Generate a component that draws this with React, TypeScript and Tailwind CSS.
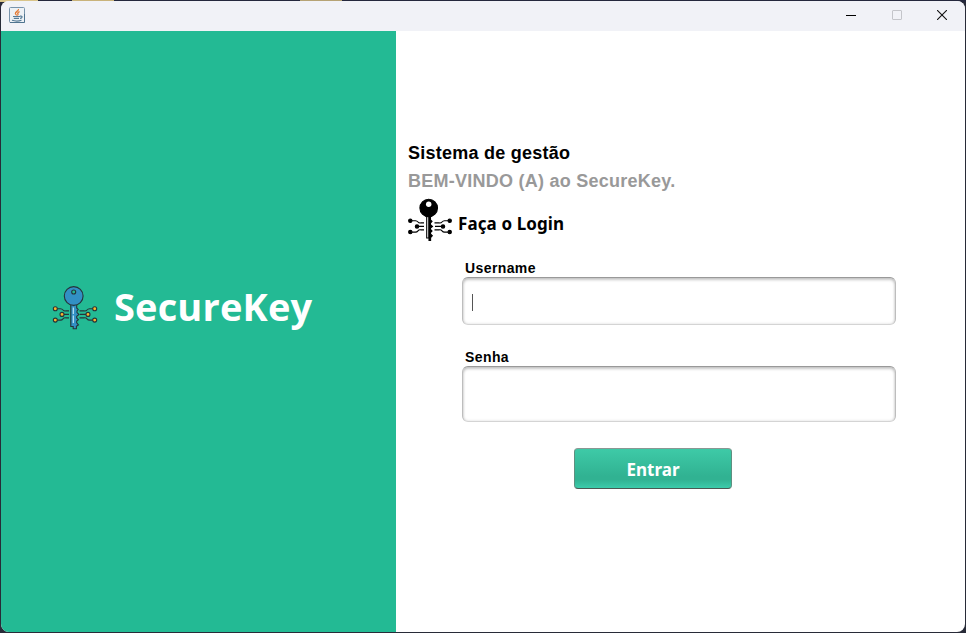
import type { ReactNode } from "react";

function CircuitKey({ dark = false }: { dark?: boolean }) {
  const line = dark ? "#000" : "#26343a";
  const fill = dark ? "#000" : "#3290c4";
  const node = dark ? "#000" : "#fdb52b";
  return (
    <svg width="46" height="46" viewBox="0 0 46 46" fill="none" className="shrink-0">
      <g stroke={line} strokeWidth="1.1">
        <path d="M5 23.7H8.5Q10 23.7 11 25T14 25.9H17M12 29.4H17M5 35.1H8.5Q10 35.1 11 33.8T14 32.9H17" />
        <path d="M41 23.7H37.5Q36 23.7 35 25T32 25.9H27.5M34 29.4H28M41 35.1H37.5Q36 35.1 35 33.8T32 32.9H27.5" />
        {[
          [3.3, 23.7],
          [10, 29.4],
          [3.3, 35.1],
          [42.7, 23.7],
          [36, 29.4],
          [42.7, 35.1],
        ].map(([x, y]) => (
          <circle key={`${x}-${y}`} cx={x} cy={y} r={dark ? 1.7 : 2} fill={node} />
        ))}
        {dark ? (
          <>
            <path fill="#fff" d="M19.7 19V41H22V19Z" />
            <path fill="#000" d="M22 18.5V43.5H23.6V40.5L25.3 38.7L23.5 37V35.5L25 34L23.5 32.5V31L25.5 29.4L23.5 27.6V26L25 24.4L23.5 23V18.5Z" />
          </>
        ) : (
          <path
            fill={fill}
            d="M18.8 18.5V41.5H21.2V43.7H24.4V41.3L26.5 39.8L24.7 37.8V36L26.4 34.6L24.7 33V31.3L27 29.5L25 27.6V26L26.2 24.6L24.7 23V18.5Z"
          />
        )}
        <circle cx="21.7" cy="11" r={dark ? 8.8 : 9.4} fill={fill} />
        <circle cx="21.7" cy={dark ? 7.3 : 7} r={dark ? 2.7 : 2} fill={dark ? "#fff" : "#23ba94"} stroke={dark ? "none" : line} />
      </g>
      {!dark && <path d="M21.3 22.5V29M21.3 30.5V38" stroke="#c5eafa" strokeWidth="1.1" />}
    </svg>
  );
}

function JavaIcon() {
  return (
    <svg width="16" height="16" viewBox="0 0 16 16" fill="none" className="mb-0.5">
      <rect x=".5" y=".5" width="15" height="15" rx="1" fill="#edf1f5" stroke="#7894ac" />
      <path d="M1 15.5H15.5V7" stroke="#4f748f" />
      <path d="M9.5 2C10 4 6 4.7 6.4 6.6C6.6 7.4 7.7 7.7 7.3 8.6M10.6 4.7C8.5 5.8 8.4 6.5 9 7.1C9.3 7.6 8.7 8.2 8.3 8.5" stroke="#e47a35" strokeWidth="1.3" />
      <path d="M4 9.5H11M11 9.2C14 8.5 13.5 11.2 11 11.4M4.8 11.4H10M3 13.3C6 14.2 10 14.1 12.5 13.2" stroke="#577c98" strokeWidth="1.2" />
    </svg>
  );
}

function Field({ label, className, children }: { label: string; className: string; children?: ReactNode }) {
  return (
    <label className="block w-[434px]">
      <span className="block h-[19px] pl-[3px] pt-px text-[14px] leading-[18px] font-bold tracking-[0.4px] text-black">{label}</span>
      <span
        className={`flex w-full items-center rounded-[6px] border border-t-[#999] border-x-[#bdbdbd] border-b-[#d4d4d4] bg-white pl-[9px] shadow-[inset_0_2px_3px_rgba(0,0,0,0.2),inset_0_0_3px_rgba(0,0,0,0.14)] ${className}`}
      >
        {children}
      </span>
    </label>
  );
}

export default function App() {
  return (
    <div className="h-[633px] w-[966px] overflow-hidden bg-[linear-gradient(90deg,#d9c48a_0,#d9c48a_38px,#25283d_38px,#25283d_72px,#c9b37b_72px,#c9b37b_114px,#25283d_114px,#25283d_300px,#b6a375_300px,#b6a375_342px,#25283d_342px)] font-['Liberation_Sans',sans-serif]">
      <div className="h-full w-full bg-[linear-gradient(180deg,transparent_0,transparent_2px,#282b38_2px)] p-px">
        <div className="flex h-full flex-col overflow-hidden rounded-[8px] bg-white">
          <header className="flex h-[30px] shrink-0 items-center justify-between bg-[#f1f2f7] pl-2">
            <JavaIcon />
            <div className="flex h-full items-center gap-[35px] pr-[18px] pb-0.5">
              <svg width="11" height="10" viewBox="0 0 11 10"><path d="M0 5.5H10" stroke="#000" /></svg>
              <svg width="10" height="10" viewBox="0 0 10 10"><rect x=".5" y=".5" width="9" height="9" rx=".5" fill="none" stroke="#c4c5ca" /></svg>
              <svg width="10" height="10" viewBox="0 0 10 10"><path d="M0 0L10 10M10 0L0 10" stroke="#111" strokeWidth="1.1" /></svg>
            </div>
          </header>
          <main className="flex min-h-0 flex-1">
            <section className="flex w-[395px] shrink-0 items-start bg-[#23ba94] pl-[51px] pt-[254px]">
              <CircuitKey />
              <h1 className="ml-4 mt-[-4px] whitespace-nowrap font-['Open_Sans',sans-serif] text-[38px] leading-[50px] font-bold tracking-[0.15px] text-white">SecureKey</h1>
            </section>
            <section className="flex-1 pl-3 pt-[110px]">
              <h2 className="text-[18px] leading-[24px] font-bold tracking-[0.25px] text-black">Sistema de gestão</h2>
              <p className="mt-1 text-[18px] leading-[24px] font-bold tracking-[0.25px] text-[#999]">BEM-VINDO (A) ao SecureKey.</p>
              <div className="-ml-px mt-[4px] flex h-[46px] items-center">
                <CircuitKey dark />
                <h3 className="ml-[5px] mt-[8px] font-['Noto_Sans',sans-serif] text-[17px] leading-6 font-bold tracking-[0.1px] text-black">Faça o Login</h3>
              </div>
              <form className="ml-[54px] mt-[15px]">
                <Field label="Username" className="h-[48px]">
                  <span className="mt-[3px] h-[17px] w-px bg-[#555]" />
                </Field>
                <div className="h-[22px]" />
                <Field label="Senha" className="h-[56px]" />
                <button
                  type="button"
                  className="ml-[112px] mt-[26px] flex h-[41px] w-[158px] items-center justify-center rounded-[4px] border border-t-[#8a9793] border-x-[#5f8f80] border-b-[#4b5954] bg-[linear-gradient(180deg,#3ecaa7_0%,#31b292_70%,#31b292_78%,#3cccab_100%)] pt-[3px] font-['Noto_Sans',sans-serif] text-[17px] font-bold text-white"
                >
                  Entrar
                </button>
              </form>
            </section>
          </main>
        </div>
      </div>
    </div>
  );
}
